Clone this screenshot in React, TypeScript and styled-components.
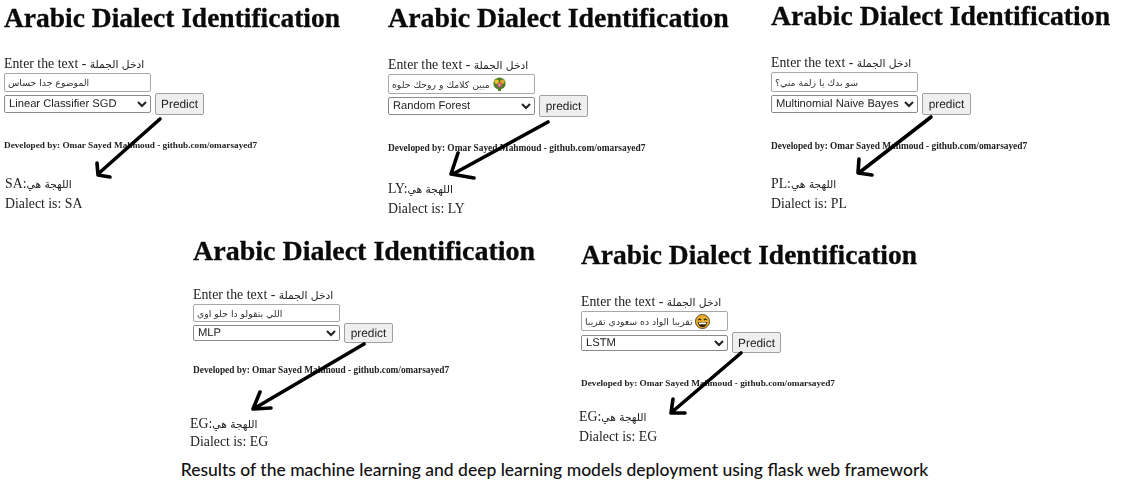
import styled, { createGlobalStyle } from "styled-components";

const GlobalStyle = createGlobalStyle`
  html, body {
    margin: 0;
    padding: 0;
    background: #fff;
  }
`;

type Emoji = "flowers" | "grin";

type CardData = {
  left: number;
  top: number;
  titleSize: number;
  creditSize: number;
  titleGap: number;
  devGap: number;
  resultGap: number;
  resultShift: number;
  resultLine: number;
  boxHeight: number;
  selectHeight: number;
  buttonHeight: number;
  text: string;
  emoji?: Emoji;
  model: string;
  button: string;
  code: string;
  arrow: string;
};

const rowOne: CardData[] = [
  {
    left: 4,
    top: 2,
    titleSize: 27.5,
    creditSize: 9.23,
    titleGap: 21,
    devGap: 24,
    resultGap: 23,
    resultShift: 1,
    resultLine: 19,
    boxHeight: 19,
    selectHeight: 18,
    buttonHeight: 22,
    text: "الموضوع جدا حساس",
    model: "Linear Classifier SGD",
    button: "Predict",
    code: "SA",
    arrow: "M156 117 L94 172 M93 161 L94 173 L106 175",
  },
  {
    left: 44,
    top: 2,
    titleSize: 27.9,
    creditSize: 9.4,
    titleGap: 22,
    devGap: 25,
    resultGap: 25,
    resultShift: 0,
    resultLine: 19,
    boxHeight: 20,
    selectHeight: 18,
    buttonHeight: 22,
    text: "مبين كلامك و روحك حلوه",
    emoji: "flowers",
    model: "Random Forest",
    button: "predict",
    code: "LY",
    arrow: "M160 120 L65 172 M70 151 L63 172 L86 176",
  },
  {
    left: 43,
    top: 0,
    titleSize: 27.75,
    creditSize: 9.33,
    titleGap: 22,
    devGap: 25,
    resultGap: 22,
    resultShift: 0,
    resultLine: 19,
    boxHeight: 20,
    selectHeight: 18,
    buttonHeight: 22,
    text: "شو بدك يا زلمة مني؟",
    model: "Multinomial Naive Bayes",
    button: "predict",
    code: "PL",
    arrow: "M160 117 L89 172 M88 159 L87 173 L101 175",
  },
];

const rowTwo: CardData[] = [
  {
    left: 193,
    top: 3,
    titleSize: 28,
    creditSize: 9.33,
    titleGap: 19,
    devGap: 21,
    resultGap: 39,
    resultShift: -3,
    resultLine: 17,
    boxHeight: 18,
    selectHeight: 16,
    buttonHeight: 20,
    text: "اللي بتقولو دا حلو اوي",
    model: "MLP",
    button: "predict",
    code: "EG",
    arrow: "M171 109 L62 173 M67 157 L60 174 L78 173",
  },
  {
    left: 48,
    top: 7,
    titleSize: 27.5,
    creditSize: 9.26,
    titleGap: 22,
    devGap: 24,
    resultGap: 18,
    resultShift: -2,
    resultLine: 19,
    boxHeight: 20,
    selectHeight: 16,
    buttonHeight: 21,
    text: "تقريبا الواد ده سعودي تقريبا",
    emoji: "grin",
    model: "LSTM",
    button: "Predict",
    code: "EG",
    arrow: "M160 114 L91 173 M92 160 L90 174 L104 174",
  },
];

const FlowersIcon = () => (
  <EmojiIcon viewBox="0 0 16 16" aria-hidden="true">
    <path d="M8 9 L8 15" stroke="#3f7a1e" strokeWidth="3" />
    <circle cx="8" cy="7" r="6.5" fill="#4c7f24" />
    <circle cx="5" cy="5" r="2.4" fill="#e5c52a" />
    <circle cx="11" cy="5" r="2.4" fill="#d9a620" />
    <circle cx="8" cy="8.5" r="2.6" fill="#d04e8c" />
    <circle cx="8" cy="8.5" r="1" fill="#f0d040" />
  </EmojiIcon>
);

const GrinIcon = () => (
  <EmojiIcon viewBox="0 0 16 16" aria-hidden="true">
    <circle cx="8" cy="8" r="7.5" fill="#e8b030" stroke="#5a4010" strokeWidth="1" />
    <path d="M3.5 6.5 Q5 4.5 6.5 6.5 M9.5 6.5 Q11 4.5 12.5 6.5" stroke="#33260a" strokeWidth="1.2" fill="none" />
    <path d="M3 8.5 H13 Q12.5 14 8 14 Q3.5 14 3 8.5 Z" fill="#33200a" />
    <path d="M4 9 H12 L11.6 10.8 H4.4 Z" fill="#fff" />
  </EmojiIcon>
);

const DialectCard = ({ data }: { data: CardData }) => (
  <S.Card $left={data.left} $top={data.top}>
    <S.Title $size={data.titleSize}>Arabic Dialect Identification</S.Title>
    <S.Prompt $gap={data.titleGap}>
      Enter the text - <S.ArabicInline>ادخل الجملة</S.ArabicInline>
    </S.Prompt>
    <S.TextBox $height={data.boxHeight}>
      <span>{data.text}</span>
      {data.emoji === "flowers" && <FlowersIcon />}
      {data.emoji === "grin" && <GrinIcon />}
    </S.TextBox>
    <S.FormRow>
      <S.ModelSelect $height={data.selectHeight} defaultValue={data.model}>
        <option>{data.model}</option>
      </S.ModelSelect>
      <S.PredictButton $height={data.buttonHeight} type="button">
        {data.button}
      </S.PredictButton>
    </S.FormRow>
    <S.Credit $gap={data.devGap} $size={data.creditSize}>
      Developed by: Omar Sayed Mahmoud - github.com/omarsayed7
    </S.Credit>
    <S.Result $gap={data.resultGap} $shift={data.resultShift} $line={data.resultLine}>
      <div>
        {data.code}:<S.ArabicInline>اللهجة هي</S.ArabicInline>
      </div>
      <div>Dialect is: {data.code}</div>
    </S.Result>
    <S.Arrow viewBox="0 0 340 220" aria-hidden="true">
      <path d={data.arrow} />
    </S.Arrow>
  </S.Card>
);

const App = () => {
  return (
    <>
      <GlobalStyle />
      <S.Page>
        <S.TopRow>
          {rowOne.map((card) => (
            <DialectCard key={card.code} data={card} />
          ))}
        </S.TopRow>
        <S.BottomRow>
          {rowTwo.map((card) => (
            <DialectCard key={card.model} data={card} />
          ))}
        </S.BottomRow>
        <S.Caption>
          Results of the machine learning and deep learning models deployment
          using flask web framework
        </S.Caption>
      </S.Page>
    </>
  );
};

const EmojiIcon = styled.svg`
  width: 15px;
  height: 15px;
  flex: none;
  margin-left: 2px;
`;

const S = {
  Page: styled.div`
    width: 1123px;
    height: 487px;
    overflow: hidden;
    background: #fff;
    display: flex;
    flex-direction: column;
    font-family: "Liberation Serif", "DejaVu Sans", serif;
    color: #222;
  `,

  TopRow: styled.div`
    display: flex;
    height: 232px;
  `,

  BottomRow: styled.div`
    display: flex;
    height: 225px;
  `,

  Card: styled.div<{ $left: number; $top: number }>`
    position: relative;
    flex: none;
    width: 340px;
    margin-left: ${(p) => p.$left}px;
    margin-top: ${(p) => p.$top}px;
    filter: blur(0.4px);
  `,

  Title: styled.h1<{ $size: number }>`
    margin: 0;
    font-size: ${(p) => p.$size}px;
    line-height: 32px;
    font-weight: 700;
    white-space: nowrap;
    color: #0a0a0a;
    -webkit-text-stroke: 0.3px #0a0a0a;
  `,

  Prompt: styled.div<{ $gap: number }>`
    margin-top: ${(p) => p.$gap}px;
    font-size: 13.8px;
    line-height: 17px;
  `,

  ArabicInline: styled.span`
    font-family: "DejaVu Sans", sans-serif;
    font-size: 10.7px;
  `,

  TextBox: styled.div<{ $height: number }>`
    box-sizing: border-box;
    width: 147px;
    height: ${(p) => p.$height}px;
    padding: 0 3px;
    display: flex;
    align-items: center;
    border: 1px solid #a8a8a8;
    border-radius: 2px;
    font-family: "DejaVu Sans", sans-serif;
    font-size: 9.3px;
    color: #333;
    white-space: nowrap;
    overflow: hidden;
  `,

  FormRow: styled.div`
    display: flex;
    align-items: center;
    gap: 4px;
    margin-top: 1px;
  `,

  ModelSelect: styled.select<{ $height: number }>`
    box-sizing: border-box;
    width: 147px;
    height: ${(p) => p.$height}px;
    padding: 0;
    font-family: "Liberation Sans", sans-serif;
    font-size: 11.2px;
    text-rendering: geometricPrecision;
    color: #222;
    background: #fff;
    border: 1px solid #8a8a8a;
    border-radius: 2px;
  `,

  PredictButton: styled.button<{ $height: number }>`
    box-sizing: border-box;
    width: 49px;
    height: ${(p) => p.$height}px;
    padding: 0;
    font-family: "Liberation Sans", sans-serif;
    font-size: 11.9px;
    text-rendering: geometricPrecision;
    color: #222;
    background: #efefef;
    border: 1px solid #a0a0a0;
    border-radius: 2px;
  `,

  Credit: styled.div<{ $gap: number; $size: number }>`
    margin-top: ${(p) => p.$gap}px;
    font-size: ${(p) => p.$size}px;
    line-height: 12px;
    font-weight: 700;
    white-space: nowrap;
  `,

  Result: styled.div<{ $gap: number; $shift: number; $line: number }>`
    margin-top: ${(p) => p.$gap}px;
    margin-left: ${(p) => p.$shift}px;
    font-size: 13.8px;
    line-height: ${(p) => p.$line}px;
  `,

  Arrow: styled.svg`
    position: absolute;
    left: 0;
    top: 0;
    width: 340px;
    height: 220px;
    overflow: visible;
    pointer-events: none;

    path {
      fill: none;
      stroke: #000;
      stroke-width: 3.6;
      stroke-linecap: round;
      stroke-linejoin: round;
    }
  `,

  Caption: styled.div`
    font-family: Lato, "Liberation Sans", sans-serif;
    font-size: 17.5px;
    line-height: 24px;
    font-weight: 500;
    color: #111;
    text-align: center;
    padding-right: 14px;
    margin-top: 1px;
    white-space: nowrap;
  `,
};

export default App;
